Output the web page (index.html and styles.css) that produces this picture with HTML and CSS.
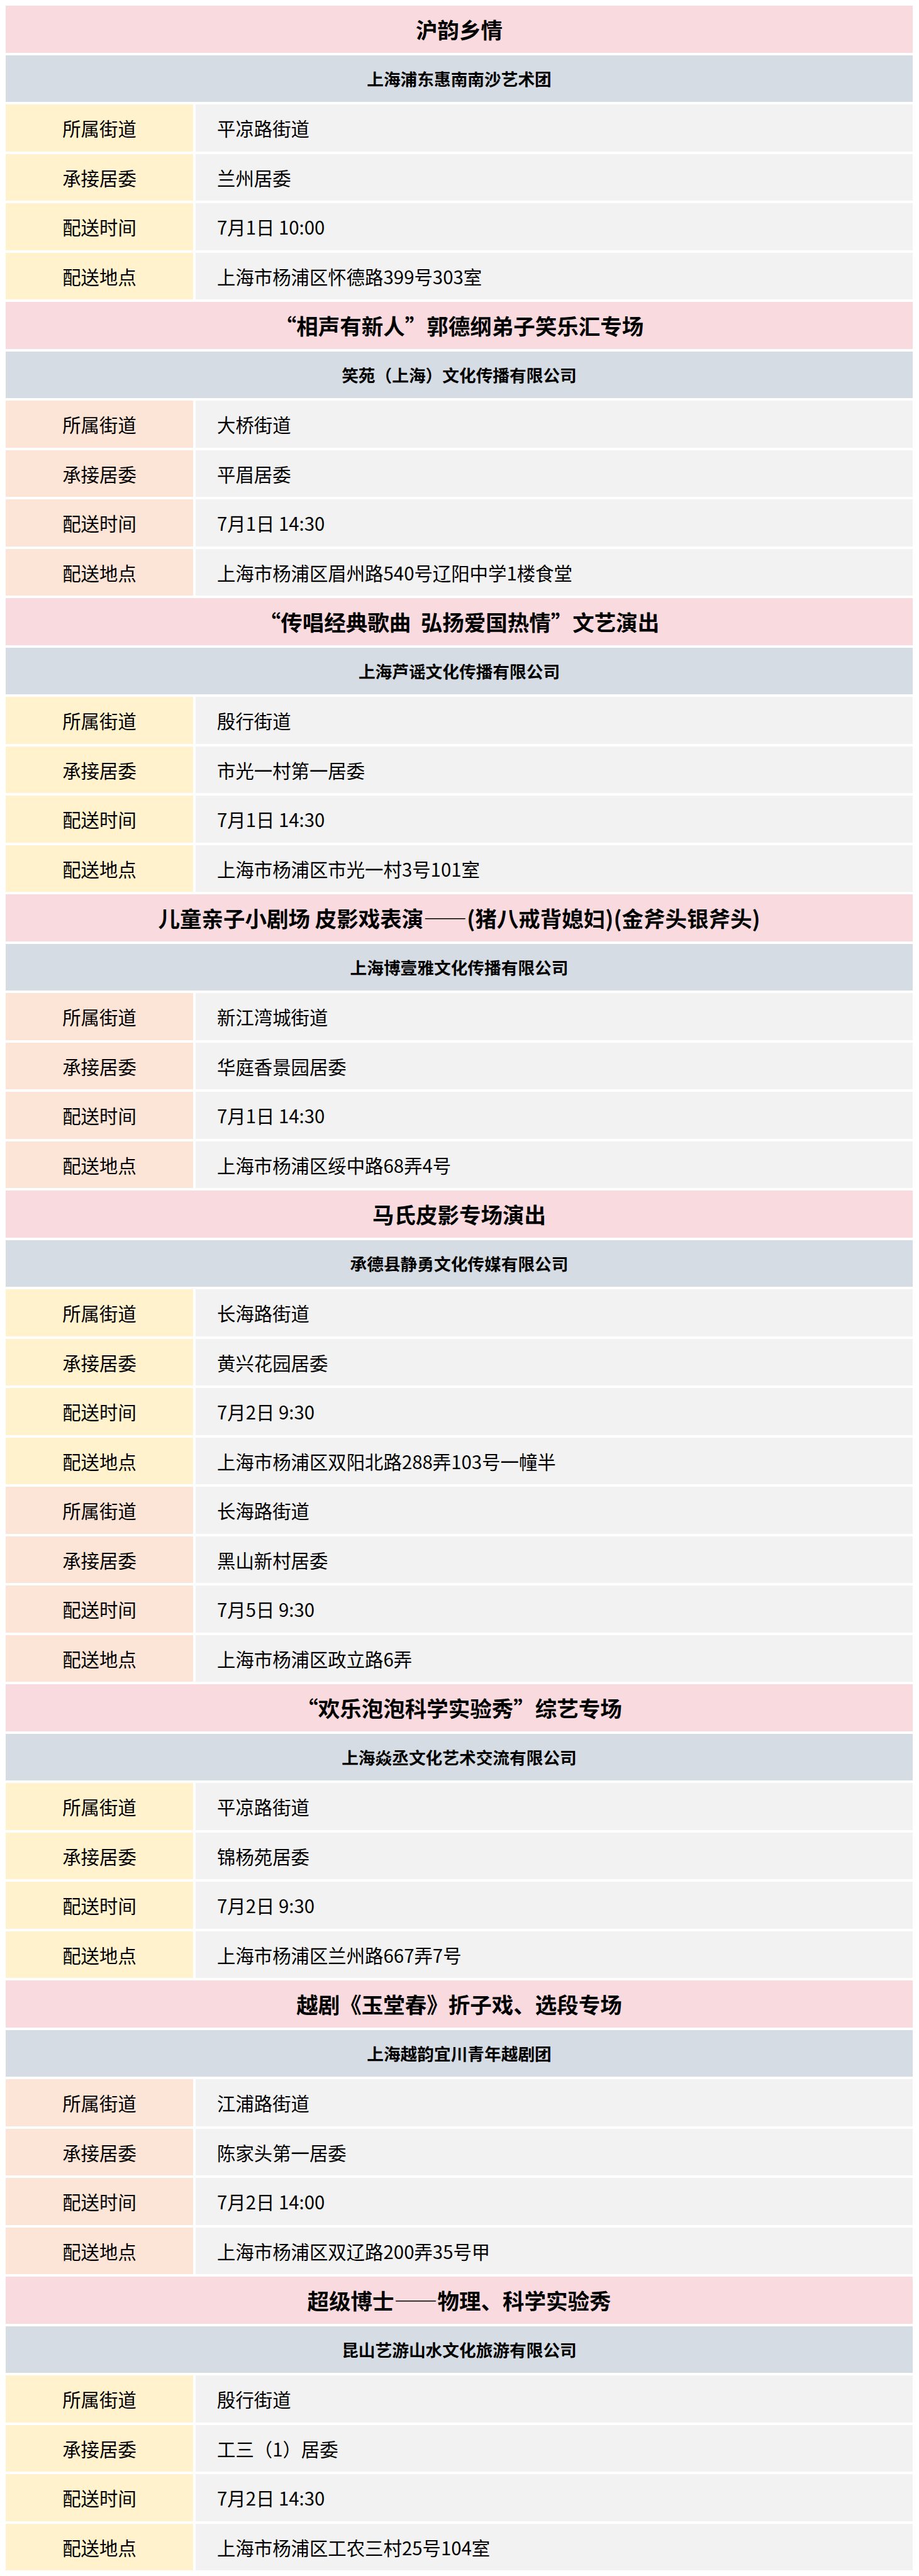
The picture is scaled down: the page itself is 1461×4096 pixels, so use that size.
FILE: index.html
```html
<!DOCTYPE html>
<html lang="zh-CN">
<head>
<meta charset="utf-8">
<title>配送演出安排</title>
<link rel="stylesheet" href="styles.css">
</head>
<body>
<main class="schedule">
  <div class="title">沪韵乡情</div>
  <div class="org">上海浦东惠南南沙艺术团</div>
  <div class="label yellow">所属街道</div><div class="value">平凉路街道</div>
  <div class="label yellow">承接居委</div><div class="value">兰州居委</div>
  <div class="label yellow">配送时间</div><div class="value">7月1日 10:00</div>
  <div class="label yellow">配送地点</div><div class="value">上海市杨浦区怀德路399号303室</div>

  <div class="title">“相声有新人”郭德纲弟子笑乐汇专场</div>
  <div class="org">笑苑（上海）文化传播有限公司</div>
  <div class="label peach">所属街道</div><div class="value">大桥街道</div>
  <div class="label peach">承接居委</div><div class="value">平眉居委</div>
  <div class="label peach">配送时间</div><div class="value">7月1日 14:30</div>
  <div class="label peach">配送地点</div><div class="value">上海市杨浦区眉州路540号辽阳中学1楼食堂</div>

  <div class="title">“传唱经典歌曲&nbsp; 弘扬爱国热情”文艺演出</div>
  <div class="org">上海芦谣文化传播有限公司</div>
  <div class="label yellow">所属街道</div><div class="value">殷行街道</div>
  <div class="label yellow">承接居委</div><div class="value">市光一村第一居委</div>
  <div class="label yellow">配送时间</div><div class="value">7月1日 14:30</div>
  <div class="label yellow">配送地点</div><div class="value">上海市杨浦区市光一村3号101室</div>

  <div class="title">儿童亲子小剧场 皮影戏表演——(猪八戒背媳妇)(金斧头银斧头)</div>
  <div class="org">上海博壹雅文化传播有限公司</div>
  <div class="label peach">所属街道</div><div class="value">新江湾城街道</div>
  <div class="label peach">承接居委</div><div class="value">华庭香景园居委</div>
  <div class="label peach">配送时间</div><div class="value">7月1日 14:30</div>
  <div class="label peach">配送地点</div><div class="value">上海市杨浦区绥中路68弄4号</div>

  <div class="title">马氏皮影专场演出</div>
  <div class="org">承德县静勇文化传媒有限公司</div>
  <div class="label yellow">所属街道</div><div class="value">长海路街道</div>
  <div class="label yellow">承接居委</div><div class="value">黄兴花园居委</div>
  <div class="label yellow">配送时间</div><div class="value">7月2日 9:30</div>
  <div class="label yellow">配送地点</div><div class="value">上海市杨浦区双阳北路288弄103号一幢半</div>
  <div class="label peach">所属街道</div><div class="value">长海路街道</div>
  <div class="label peach">承接居委</div><div class="value">黑山新村居委</div>
  <div class="label peach">配送时间</div><div class="value">7月5日 9:30</div>
  <div class="label peach">配送地点</div><div class="value">上海市杨浦区政立路6弄</div>

  <div class="title">“欢乐泡泡科学实验秀”综艺专场</div>
  <div class="org">上海焱丞文化艺术交流有限公司</div>
  <div class="label yellow">所属街道</div><div class="value">平凉路街道</div>
  <div class="label yellow">承接居委</div><div class="value">锦杨苑居委</div>
  <div class="label yellow">配送时间</div><div class="value">7月2日 9:30</div>
  <div class="label yellow">配送地点</div><div class="value">上海市杨浦区兰州路667弄7号</div>

  <div class="title">越剧《玉堂春》折子戏、选段专场</div>
  <div class="org">上海越韵宜川青年越剧团</div>
  <div class="label peach">所属街道</div><div class="value">江浦路街道</div>
  <div class="label peach">承接居委</div><div class="value">陈家头第一居委</div>
  <div class="label peach">配送时间</div><div class="value">7月2日 14:00</div>
  <div class="label peach">配送地点</div><div class="value">上海市杨浦区双辽路200弄35号甲</div>

  <div class="title">超级博士——物理、科学实验秀</div>
  <div class="org">昆山艺游山水文化旅游有限公司</div>
  <div class="label yellow">所属街道</div><div class="value">殷行街道</div>
  <div class="label yellow">承接居委</div><div class="value">工三（1）居委</div>
  <div class="label yellow">配送时间</div><div class="value">7月2日 14:30</div>
  <div class="label yellow">配送地点</div><div class="value">上海市杨浦区工农三村25号104室</div>
</main>
</body>
</html>
```

FILE: styles.css
```css
html, body {
  margin: 0;
  padding: 0;
  background: #ffffff;
}

body {
  font-family: "Noto Sans CJK SC", "Noto Sans", sans-serif;
  color: #000000;
}

.schedule {
  display: grid;
  grid-template-columns: 298px 1fr;
  grid-auto-rows: 74.5px;
  gap: 4px;
  margin: 9px 10px 9px 9px;
}

.title,
.org {
  grid-column: 1 / -1;
  display: flex;
  align-items: center;
  justify-content: center;
  font-weight: 700;
  white-space: pre;
}

.title {
  background: #f9dadf;
  font-size: 34.5px;
}

.org {
  background: #d6dce4;
  font-size: 26.7px;
}

.label,
.value {
  display: flex;
  align-items: center;
  font-size: 29.4px;
  font-weight: 400;
}

.label {
  justify-content: center;
}

.yellow {
  background: #fff2cc;
}

.peach {
  background: #fce4d6;
}

.value {
  background: #f2f2f2;
  padding-left: 34px;
}
```
